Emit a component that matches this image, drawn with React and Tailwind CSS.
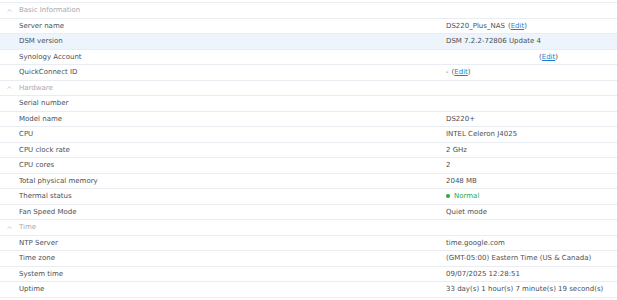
import { ChevronUp } from 'lucide-react';

// Sections of the info panel
const sections = [
  {
    title: 'Basic Information',
    rows: [
      { label: 'Server name', value: 'DS220_Plus_NAS', edit: true },
      { label: 'DSM version', value: 'DSM 7.2.2-72806 Update 4', active: true },
      { label: 'Synology Account', value: '', edit: true, editOffset: true },
      { label: 'QuickConnect ID', value: '-', edit: true },
    ],
  },
  {
    title: 'Hardware',
    rows: [
      { label: 'Serial number', value: '' },
      { label: 'Model name', value: 'DS220+' },
      { label: 'CPU', value: 'INTEL Celeron J4025' },
      { label: 'CPU clock rate', value: '2 GHz' },
      { label: 'CPU cores', value: '2' },
      { label: 'Total physical memory', value: '2048 MB' },
      { label: 'Thermal status', value: 'Normal', status: true },
      { label: 'Fan Speed Mode', value: 'Quiet mode' },
    ],
  },
  {
    title: 'Time',
    rows: [
      { label: 'NTP Server', value: 'time.google.com' },
      { label: 'Time zone', value: '(GMT-05:00) Eastern Time (US & Canada)' },
      { label: 'System time', value: '09/07/2025 12:28:51' },
      { label: 'Uptime', value: '33 day(s) 1 hour(s) 7 minute(s) 19 second(s)' },
    ],
  },
];

const EditLink = () => (
  <span>
    (<span className="text-[#1a7fd9] underline">Edit</span>)
  </span>
);

const App = () => {
  return (
    <div
      className="w-[617px] h-[300px] bg-white pt-[2px] overflow-hidden text-[7px] text-[#4a4f55]"
      style={{ fontFamily: '"DejaVu Sans", Verdana, sans-serif' }}
    >
      <div className="border-t border-[#e9edf1]">
        {sections.map((section) => (
          <div key={section.title}>
            <div className="h-[15.5px] flex items-center border-b border-[#e9edf1] text-[#a3a9b0]">
              <ChevronUp className="w-[7px] h-[7px] ml-[6px] mr-[6px]" strokeWidth={2} />
              <span>{section.title}</span>
            </div>
            {section.rows.map((row) => (
              <div
                key={row.label}
                className={`h-[15.5px] flex items-center border-b border-[#e9edf1] ${row.active ? 'bg-[#eef4fb]' : ''}`}
              >
                <div className="w-[446px] pl-[19px] shrink-0">{row.label}</div>
                <div className={`flex items-center ${row.editOffset ? 'pl-[93px]' : ''}`}>
                  {row.status ? (
                    <span className="flex items-center text-[#27a844]">
                      <span className="w-[4px] h-[4px] rounded-full bg-[#27a844] mr-[4px]"></span>
                      {row.value}
                    </span>
                  ) : (
                    <span>{row.value}</span>
                  )}
                  {row.edit && (
                    <span className={row.value ? 'ml-[3px]' : ''}>
                      <EditLink />
                    </span>
                  )}
                </div>
              </div>
            ))}
          </div>
        ))}
      </div>
    </div>
  );
};

export default App;
